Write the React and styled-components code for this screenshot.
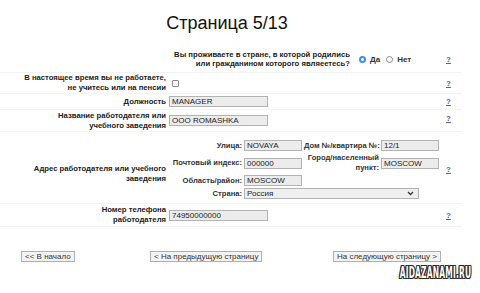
import styled, { createGlobalStyle } from 'styled-components';

const GlobalStyle = createGlobalStyle`
  body {
    margin: 0;
    background: #fff;
    font-family: "Liberation Sans", Arial, sans-serif;
    color: #222;
  }
`;

export default function App() {
  return (
    <Page>
      <GlobalStyle />
      <Title>Страница 5/13</Title>

      <Row $height={26}>
        <Label />
        <Field>
          <Question>
            Вы проживаете в стране, в которой родились<br />
            или гражданином которого являеетесь?
          </Question>
          <RadioGroup>
            <Radio $checked />
            <RadioText>Да</RadioText>
            <Radio />
            <RadioText>Нет</RadioText>
          </RadioGroup>
        </Field>
        <Help>?</Help>
      </Row>

      <Row $height={19}>
        <Label>
          В настоящее время вы не работаете,<br />
          не учитесь или на пенсии
        </Label>
        <Field>
          <Checkbox />
        </Field>
        <Help>?</Help>
      </Row>

      <Row $height={15}>
        <Label>Должность</Label>
        <Field>
          <TextInput readOnly defaultValue="MANAGER" />
        </Field>
        <Help>?</Help>
      </Row>

      <Row $height={21}>
        <Label>
          Название работодателя или<br />
          учебного заведения
        </Label>
        <Field>
          <TextInput readOnly defaultValue="OOO ROMASHKA" />
        </Field>
        <Help $up>?</Help>
      </Row>

      <AddressRow>
        <Label $shift>
          Адрес работодателя или учебного<br />
          заведения
        </Label>
        <AddressGrid>
          <SubLabel>Улица:</SubLabel>
          <SmallInput readOnly defaultValue="NOVAYA" />
          <SubLabel>Дом №/квартира №:</SubLabel>
          <SmallInput readOnly defaultValue="12/1" />

          <SubLabel>Почтовый индекс:</SubLabel>
          <SmallInput readOnly defaultValue="000000" />
          <SubLabel>
            Город/населенный<br />
            пункт:
          </SubLabel>
          <SmallInput readOnly defaultValue="MOSCOW" />

          <SubLabel>Область/район:</SubLabel>
          <SmallInput readOnly defaultValue="MOSCOW" />
          <span />
          <span />

          <SubLabel>Страна:</SubLabel>
          <SelectBox>
            <span>Россия</span>
            <svg width="7" height="5" viewBox="0 0 7 5">
              <path d="M1 1 L3.5 3.5 L6 1" fill="none" stroke="#333" strokeWidth="1.3" />
            </svg>
          </SelectBox>
        </AddressGrid>
        <Help>?</Help>
      </AddressRow>

      <Row $height={22}>
        <Label>
          Номер телефона<br />
          работодателя
        </Label>
        <Field>
          <TextInput readOnly defaultValue="74950000000" />
        </Field>
        <Help>?</Help>
      </Row>

      <Nav>
        <NavButton>&lt;&lt; В начало</NavButton>
        <NavButton>&lt; На предыдущую страницу</NavButton>
        <NavButton>На следующую страницу &gt;</NavButton>
      </Nav>

      <WatermarkBar>
        <Watermark>AIDAZANAMI.RU</Watermark>
      </WatermarkBar>
    </Page>
  );
}

const Page = styled.div`
  width: 480px;
  height: 293px;
  overflow: hidden;
`;

const Title = styled.h1`
  margin: 0;
  padding: 13px 26px 0 0;
  height: 46px;
  box-sizing: border-box;
  font-size: 18px;
  line-height: 20px;
  font-weight: 400;
  text-align: center;
  color: #111;
`;

const Row = styled.div`
  display: grid;
  grid-template-columns: 166px 271px auto;
  column-gap: 3px;
  align-items: center;
  min-height: ${(p) => p.$height}px;
  width: 462px;
  border-bottom: 1px solid #f3f3f3;
`;

const AddressRow = styled(Row)`
  padding: 8px 0 4px;
`;

const Label = styled.div`
  padding-left: 15px;
  text-align: right;
  white-space: nowrap;
  font-size: 7.7px;
  line-height: 10px;
  font-weight: 700;
  color: #222;
  margin-top: ${(p) => (p.$shift ? '8px' : '0')};
`;

const Field = styled.div`
  display: flex;
  align-items: center;
`;

const Question = styled.div`
  width: 181px;
  text-align: right;
  white-space: nowrap;
  font-size: 7.7px;
  line-height: 9px;
  font-weight: 700;
  color: #222;
`;

const RadioGroup = styled.div`
  display: flex;
  align-items: center;
  margin-left: 9px;
`;

const Radio = styled.span`
  width: 7px;
  height: 7px;
  box-sizing: border-box;
  border-radius: 50%;
  border: ${(p) => (p.$checked ? '2px solid #3f8de6' : '1px solid #8a8a8a')};
  background: #fff;
  margin-right: 4px;
`;

const RadioText = styled.span`
  font-size: 8px;
  font-weight: 700;
  color: #333;
  margin-right: 6px;
`;

const Checkbox = styled.span`
  width: 7px;
  height: 7px;
  box-sizing: border-box;
  border: 1px solid #8a8a8a;
  border-radius: 1px;
  margin-left: 3px;
`;

const TextInput = styled.input`
  width: 99px;
  height: 11px;
  box-sizing: border-box;
  padding: 0 2px;
  border: 1px solid #b3b3b3;
  background: #ececec;
  font-family: "Liberation Sans", Arial, sans-serif;
  font-size: 8px;
  color: #222;
  outline: none;
`;

const SmallInput = styled(TextInput)`
  width: 58px;
`;

const Help = styled.a`
  padding-left: 3px;
  font-size: 8px;
  font-weight: 700;
  color: #5a5aa8;
  text-decoration: underline;
  margin-top: ${(p) => (p.$up ? '-4px' : '0')};
`;

const AddressGrid = styled.div`
  display: grid;
  grid-template-columns: 73px 58px 75px 59px;
  column-gap: 2px;
  row-gap: 2px;
  align-items: center;
`;

const SubLabel = styled.div`
  text-align: right;
  white-space: nowrap;
  font-size: 7.6px;
  line-height: 10px;
  font-weight: 700;
  color: #333;
`;

const SelectBox = styled.div`
  grid-column: 2 / span 3;
  width: 175px;
  height: 11px;
  box-sizing: border-box;
  display: flex;
  align-items: center;
  justify-content: space-between;
  padding: 0 4px 0 2px;
  border: 1px solid #b3b3b3;
  background: #efefef;
  font-size: 8px;
  color: #222;
`;

const Nav = styled.div`
  display: grid;
  grid-template-columns: 129px 183px auto;
  align-items: start;
  padding-left: 21px;
  margin-top: 24px;
`;

const NavButton = styled.button`
  justify-self: start;
  height: 11px;
  padding: 0 3px;
  box-sizing: border-box;
  border: 1px solid #b0b0b0;
  background: #f3f3f3;
  font-family: "Liberation Sans", Arial, sans-serif;
  font-size: 8px;
  line-height: 9px;
  color: #333;
`;

const WatermarkBar = styled.div`
  display: flex;
  justify-content: flex-end;
  padding-right: 9px;
  margin-top: 3px;
`;

const Watermark = styled.span`
  display: inline-block;
  transform: scaleX(0.47);
  transform-origin: right center;
  font-family: "DejaVu Sans", "Liberation Sans", sans-serif;
  font-weight: 700;
  font-size: 16px;
  line-height: 16px;
  letter-spacing: 0.4px;
  color: #fff;
  text-shadow:
    2px 0 0 #2a2a2a, -2px 0 0 #2a2a2a, 0 1px 0 #2a2a2a, 0 -1px 0 #2a2a2a,
    2px 1px 0 #2a2a2a, -2px -1px 0 #2a2a2a, 2px -1px 0 #2a2a2a, -2px 1px 0 #2a2a2a;
`;
